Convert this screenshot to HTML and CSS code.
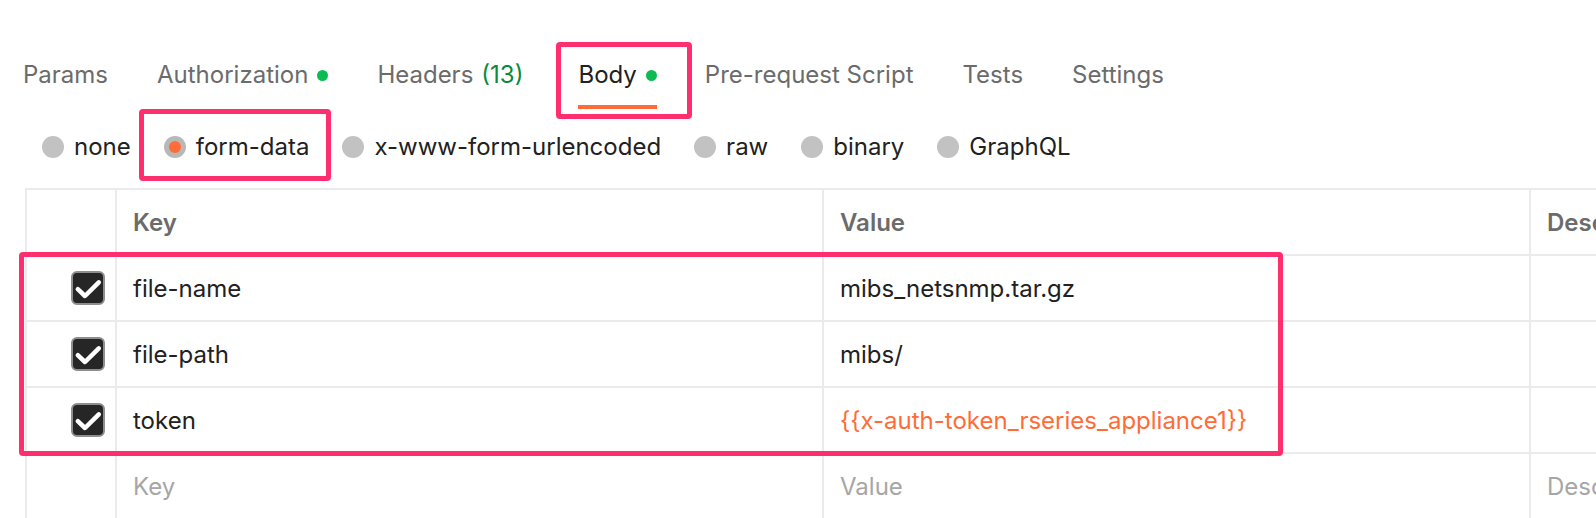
FILE: index.html
```html
<!DOCTYPE html>
<html lang="en">
<head>
<meta charset="utf-8">
<title>Request Body</title>
<link rel="stylesheet" href="styles.css">
</head>
<body>
<div class="page">
  <nav class="tabs">
    <div class="tab"><span class="tab-label">Params</span><span class="tab-underline"></span></div>
    <div class="tab"><span class="tab-label">Authorization<span class="dot"></span></span><span class="tab-underline"></span></div>
    <div class="tab"><span class="tab-label">Headers<span class="count">(13)</span></span><span class="tab-underline"></span></div>
    <div class="tab active"><span class="tab-label">Body<span class="dot"></span></span><span class="tab-underline"></span></div>
    <div class="tab"><span class="tab-label">Pre-request Script</span><span class="tab-underline"></span></div>
    <div class="tab"><span class="tab-label">Tests</span><span class="tab-underline"></span></div>
    <div class="tab"><span class="tab-label">Settings</span><span class="tab-underline"></span></div>
  </nav>

  <div class="body-types">
    <div class="radio"><span class="radio-dot"></span>none</div>
    <div class="radio"><span class="radio-dot checked"></span>form-data</div>
    <div class="radio"><span class="radio-dot"></span>x-www-form-urlencoded</div>
    <div class="radio"><span class="radio-dot"></span>raw</div>
    <div class="radio"><span class="radio-dot"></span>binary</div>
    <div class="radio"><span class="radio-dot"></span>GraphQL</div>
  </div>

  <div class="kv-table">
    <div class="cell cell-check"></div>
    <div class="cell head">Key</div>
    <div class="cell head">Value</div>
    <div class="cell head">Description</div>

    <div class="cell cell-check"><span class="check"><svg viewBox="0 0 30 30" width="30" height="30"><path d="M4.8 16.2 L12 23 L25.8 9.3" fill="none" stroke="#fff" stroke-width="4.5" stroke-linecap="round" stroke-linejoin="round"/></svg></span></div>
    <div class="cell">file-name</div>
    <div class="cell">mibs_netsnmp.tar.gz</div>
    <div class="cell"></div>

    <div class="cell cell-check"><span class="check"><svg viewBox="0 0 30 30" width="30" height="30"><path d="M4.8 16.2 L12 23 L25.8 9.3" fill="none" stroke="#fff" stroke-width="4.5" stroke-linecap="round" stroke-linejoin="round"/></svg></span></div>
    <div class="cell">file-path</div>
    <div class="cell">mibs/</div>
    <div class="cell"></div>

    <div class="cell cell-check"><span class="check"><svg viewBox="0 0 30 30" width="30" height="30"><path d="M4.8 16.2 L12 23 L25.8 9.3" fill="none" stroke="#fff" stroke-width="4.5" stroke-linecap="round" stroke-linejoin="round"/></svg></span></div>
    <div class="cell">token</div>
    <div class="cell variable">{{x-auth-token_rseries_appliance1}}</div>
    <div class="cell"></div>

    <div class="cell cell-check"></div>
    <div class="cell placeholder">Key</div>
    <div class="cell placeholder">Value</div>
    <div class="cell placeholder">Description</div>
  </div>

  <div class="hl hl-body"></div>
  <div class="hl hl-formdata"></div>
  <div class="hl hl-rows"></div>
</div>
</body>
</html>
```

FILE: styles.css
```css
html, body {
  margin: 0;
  padding: 0;
  background: #ffffff;
}

body {
  font-family: Inter, "Noto Sans", "Liberation Sans", sans-serif;
  overflow: hidden;
}

.page {
  position: relative;
  width: 1596px;
  height: 518px;
  overflow: hidden;
}

/* Tabs */
.tabs {
  display: flex;
  gap: 49px;
  padding: 59px 0 0 23px;
}

.tab {
  display: flex;
  flex-direction: column;
  align-items: stretch;
}

.tab.active {
  margin-left: 6px;
  margin-right: -1px;
}

.tab-label {
  display: flex;
  align-items: center;
  font-size: 24px;
  line-height: 32px;
  color: #6b6b6b;
  white-space: nowrap;
}

.tab.active .tab-label {
  color: #212121;
}

.tab-underline {
  height: 4px;
  margin-top: 14px;
  background: transparent;
}

.tab.active .tab-underline {
  background: #ff6c37;
}

.dot {
  width: 11px;
  height: 11px;
  border-radius: 50%;
  background: #0cbb52;
  margin-left: 9px;
}

.count {
  color: #0a8a3c;
  margin-left: 8px;
}

/* Body type radios */
.body-types {
  display: flex;
  gap: 33px;
  padding: 22px 0 0 42px;
}

.radio {
  display: flex;
  align-items: center;
  gap: 10px;
  font-size: 24px;
  line-height: 32px;
  color: #212121;
  white-space: nowrap;
}

.radio-dot {
  width: 22px;
  height: 22px;
  border-radius: 50%;
  background: #c2c2c2;
  display: flex;
  align-items: center;
  justify-content: center;
}

.radio-dot.checked {
  background: #b8b8b8;
}

.radio-dot.checked::after {
  content: "";
  width: 12px;
  height: 12px;
  border-radius: 50%;
  background: #ff6c37;
}

/* Key/value table */
.kv-table {
  margin: 25px 0 0 25px;
  display: grid;
  grid-template-columns: 90px 707px 707px 400px;
  width: max-content;
  border-top: 2px solid #ebebeb;
  border-left: 2px solid #ebebeb;
}

.cell {
  height: 66px;
  box-sizing: border-box;
  border-right: 2px solid #ebebeb;
  border-bottom: 2px solid #ebebeb;
  display: flex;
  align-items: center;
  padding-left: 16px;
  font-size: 24px;
  color: #212121;
  white-space: nowrap;
}

.cell.head {
  color: #6b6b6b;
  font-weight: 600;
}

.cell.placeholder {
  color: #a6a6a6;
}

.cell.variable {
  color: #ff6c37;
}

.cell-check {
  justify-content: flex-end;
  padding-left: 0;
  padding-right: 10px;
}

.check {
  width: 34px;
  height: 34px;
  box-sizing: border-box;
  border: 2px solid #8e8e8e;
  border-radius: 6px;
  background: #262626;
  display: flex;
}

/* Annotation highlights */
.hl {
  position: absolute;
  box-sizing: border-box;
  border: 5px solid #ff2e6f;
  border-radius: 4px;
  pointer-events: none;
}

.hl-body {
  left: 556px;
  top: 42px;
  width: 136px;
  height: 77px;
}

.hl-formdata {
  left: 139px;
  top: 109px;
  width: 192px;
  height: 72px;
}

.hl-rows {
  left: 19px;
  top: 252px;
  width: 1264px;
  height: 204px;
}
```
